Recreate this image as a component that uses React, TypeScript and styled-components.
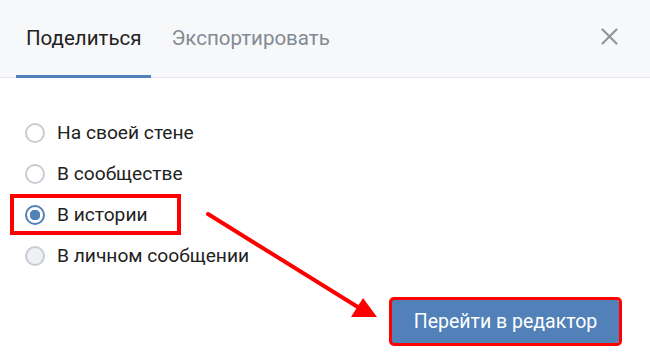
import React, { useState } from "react";
import styled, { createGlobalStyle } from "styled-components";

const options = [
  "На своей стене",
  "В сообществе",
  "В истории",
  "В личном сообщении",
];

function App() {
  const [tab, setTab] = useState(0);
  const [picked, setPicked] = useState(2);

  return (
    <>
      <GlobalStyle />
      <Modal>
        <Header>
          <Tabs>
            {["Поделиться", "Экспортировать"].map((title, i) => (
              <Tab key={title} active={tab === i} onClick={() => setTab(i)}>
                {title}
              </Tab>
            ))}
          </Tabs>
          <CloseButton aria-label="Закрыть">
            <svg width="17" height="17" viewBox="0 0 17 17">
              <path
                d="M1.5 1.5 L15.5 15.5 M15.5 1.5 L1.5 15.5"
                stroke="#939699"
                strokeWidth="2.2"
                strokeLinecap="round"
              />
            </svg>
          </CloseButton>
        </Header>

        <Body>
          <RadioList>
            {options.map((label, i) => (
              <RadioRow
                key={label}
                marked={i === 2}
                onClick={() => setPicked(i)}
              >
                <RadioCircle checked={picked === i} dim={i === 3} />
                <span>{label}</span>
              </RadioRow>
            ))}
          </RadioList>

          <Footer>
            <PrimaryButton>Перейти в редактор</PrimaryButton>
          </Footer>

          <Arrow width="200" height="130" viewBox="0 0 200 130">
            <line
              x1="3"
              y1="3"
              x2="156"
              y2="98"
              stroke="#ff0000"
              strokeWidth="4"
              strokeLinecap="round"
            />
            <polygon points="172,106 146,106 158,87" fill="#ff0000" />
          </Arrow>
        </Body>
      </Modal>
    </>
  );
}

const GlobalStyle = createGlobalStyle`
  html, body {
    margin: 0;
    padding: 0;
    background: #ffffff;
  }
  body {
    font-family: Roboto, "Open Sans", "Liberation Sans", sans-serif;
    color: #222222;
  }
`;

const Modal = styled.div`
  width: 650px;
  height: 361px;
  background: #ffffff;
  overflow: hidden;
`;

const Header = styled.div`
  height: 77px;
  background: #f7f8fa;
  border-bottom: 1px solid #e4e6ea;
  display: flex;
  align-items: stretch;
  justify-content: space-between;
  padding: 0 30px 0 16px;
`;

const Tabs = styled.div`
  display: flex;
  gap: 11px;
`;

const Tab = styled.div<{ active?: boolean }>`
  display: flex;
  align-items: center;
  padding: 0 9px 0 10px;
  margin-bottom: -1px;
  font-size: 20.5px;
  color: ${(p) => (p.active ? "#222222" : "#828a94")};
  border-bottom: 3px solid ${(p) => (p.active ? "#5181b8" : "transparent")};
  cursor: pointer;
`;

const CloseButton = styled.button`
  align-self: center;
  margin-top: -4px;
  border: 0;
  background: none;
  padding: 0;
  width: 22px;
  height: 22px;
  display: flex;
  align-items: center;
  justify-content: center;
  cursor: pointer;
`;

const Body = styled.div`
  position: relative;
  padding: 34px 31px 0 10px;
`;

const RadioList = styled.div`
  display: flex;
  flex-direction: column;
  align-items: flex-start;
`;

const RadioRow = styled.label<{ marked?: boolean }>`
  display: flex;
  align-items: center;
  gap: 12px;
  height: 41px;
  padding: 0 15px;
  font-size: 19.2px;
  color: #222222;
  cursor: pointer;
  outline: ${(p) => (p.marked ? "4px solid #ff0000" : "none")};
  outline-offset: ${(p) => (p.marked ? "-4px" : "0")};
  padding-right: ${(p) => (p.marked ? "33px" : "15px")};
`;

const RadioCircle = styled.span<{ checked?: boolean; dim?: boolean }>`
  box-sizing: border-box;
  width: 20px;
  height: 20px;
  border-radius: 50%;
  border: 2px solid ${(p) => (p.checked ? "#5181b8" : "#c8cdd3")};
  background: ${(p) =>
    p.checked
      ? "radial-gradient(circle, #5181b8 0 5px, #ffffff 5.5px)"
      : p.dim
      ? "#eef0f3"
      : "#ffffff"};
  flex-shrink: 0;
`;

const Footer = styled.div`
  display: flex;
  justify-content: flex-end;
  margin-top: 24px;
`;

const PrimaryButton = styled.button`
  border: 0;
  background: #5181b8;
  color: #ffffff;
  font-family: inherit;
  font-size: 19.5px;
  height: 43px;
  width: 227px;
  border-radius: 2px;
  outline: 3px solid #ff0000;
  outline-offset: 0;
  box-shadow: -2px 0 0 #ff0000;
  cursor: pointer;
`;

const Arrow = styled.svg`
  position: absolute;
  left: 205px;
  top: 133px;
  overflow: visible;
`;

export default App;
